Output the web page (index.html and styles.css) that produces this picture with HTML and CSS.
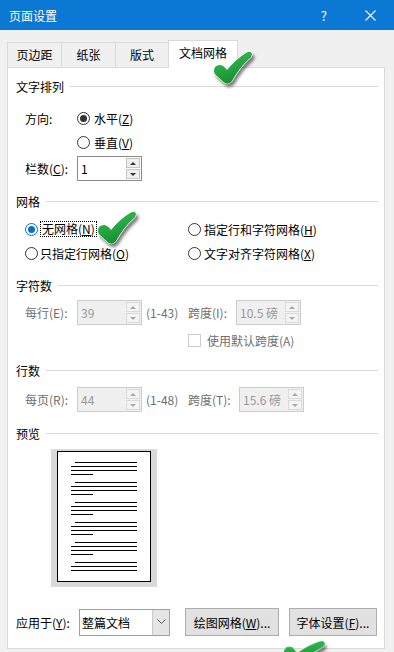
FILE: index.html
```html
<!DOCTYPE html>
<html lang="zh-CN">
<head>
  <meta charset="UTF-8">
  <title>页面设置</title>
  <link rel="stylesheet" href="styles.css">
</head>
<body>
  <div class="titlebar">
    <span class="title">页面设置</span>
    <span class="help">?</span>
    <svg class="close" width="11" height="11" viewBox="0 0 11 11"><path d="M0.5 0.5 L10.5 10.5 M10.5 0.5 L0.5 10.5" stroke="#fff" stroke-width="1.1"/></svg>
  </div>

  <div class="tabs">
    <div class="tab t1">页边距</div>
    <div class="tab t2">纸张</div>
    <div class="tab t3">版式</div>
    <div class="tab active">文档网格</div>
  </div>

  <div class="panel">
    <div class="group-title g1">文字排列</div>
    <div class="row dir">
      <span class="label">方向:</span>
      <span class="radio checked"></span><span>水平(<u>Z</u>)</span>
    </div>
    <div class="row dir indent">
      <span class="radio"></span><span>垂直(<u>V</u>)</span>
    </div>
    <div class="row cols">
      <span class="label">栏数(<u>C</u>):</span>
      <div class="spin"><span class="val">1</span><span class="arrows"><i class="up"></i><i class="down"></i></span></div>
    </div>

    <div class="group-title g2">网格</div>
    <div class="row grid first">
      <div class="opt"><span class="radio on"></span><span class="focus">无网格(<u>N</u>)</span></div>
      <div class="opt"><span class="radio"></span><span>指定行和字符网格(<u>H</u>)</span></div>
    </div>
    <div class="row grid">
      <div class="opt"><span class="radio"></span><span>只指定行网格(<u>O</u>)</span></div>
      <div class="opt"><span class="radio"></span><span>文字对齐字符网格(<u>X</u>)</span></div>
    </div>

    <div class="group-title g3">字符数</div>
    <div class="row num off chars">
      <span class="label">每行(E):</span>
      <div class="spin off"><span class="val">39</span><span class="arrows"><i class="up"></i><i class="down"></i></span></div>
      <span class="range">(1-43)</span>
      <span class="label2">跨度(I):</span>
      <div class="spin off"><span class="val">10.5 磅</span><span class="arrows"><i class="up"></i><i class="down"></i></span></div>
    </div>
    <div class="row check off">
      <span class="box"></span><span>使用默认跨度(A)</span>
    </div>

    <div class="group-title g4">行数</div>
    <div class="row num off lines">
      <span class="label">每页(R):</span>
      <div class="spin off"><span class="val">44</span><span class="arrows"><i class="up"></i><i class="down"></i></span></div>
      <span class="range">(1-48)</span>
      <span class="label2 wide">跨度(T):</span>
      <div class="spin off"><span class="val">15.6 磅</span><span class="arrows"><i class="up"></i><i class="down"></i></span></div>
    </div>

    <div class="group-title g5">预览</div>
    <div class="preview">
      <div class="page">
        <div class="para"><i class="ind"></i><i></i><i></i><i class="short"></i></div>
        <div class="para"><i class="ind"></i><i></i><i></i><i class="short"></i></div>
        <div class="para"><i class="ind"></i><i></i><i></i><i class="short"></i></div>
        <div class="para"><i class="ind"></i><i></i><i></i><i class="short"></i></div>
        <div class="para"><i class="ind"></i><i></i><i></i><i class="short"></i></div>
        <div class="para"><i class="ind"></i><i></i><i></i></div>
      </div>
    </div>

    <div class="row bottom">
      <span class="label3">应用于(<u>Y</u>):</span>
      <div class="select"><span class="val">整篇文档</span><span class="drop"><svg width="9" height="6" viewBox="0 0 9 6"><path d="M0.5 0.5 L4.5 4.5 L8.5 0.5" fill="none" stroke="#555" stroke-width="1"/></svg></span></div>
      <button class="btn b1">绘图网格(<u>W</u>)...</button>
      <button class="btn b2">字体设置(<u>F</u>)...</button>
    </div>
  </div>

  <svg width="0" height="0" class="defs">
    <defs>
      <linearGradient id="tickfill" x1="0" y1="0" x2="0.4" y2="1">
        <stop offset="0" stop-color="#3cc25a"/>
        <stop offset="1" stop-color="#14902f"/>
      </linearGradient>
      <path id="tickshape" d="M1,20 Q1,14 7,14 Q10,14 14,19 Q23,8 33,2 Q38,-1 39,3 Q39,6 36,8 Q26,17 19,30 Q16,34 12,32 Q9,30 5,26 Q1,23 1,20 Z"/>
    </defs>
  </svg>
  <svg class="tick tick-tab" width="40" height="34" viewBox="0 0 40 34"><use href="#tickshape"/></svg>
  <svg class="tick tick-grid" width="40" height="34" viewBox="0 0 40 34"><use href="#tickshape"/></svg>
  <svg class="tick tick-bottom" width="40" height="34" viewBox="0 0 40 34"><use href="#tickshape"/></svg>
</body>
</html>
```

FILE: styles.css
```css
body {
  margin: 0;
  width: 394px;
  height: 652px;
  overflow: hidden;
  position: relative;
  background: #f0f0f0;
  font-family: "Microsoft YaHei", "Noto Sans CJK SC", sans-serif;
  font-size: 12px;
  color: #000;
}
u { text-decoration-thickness: 1px; text-underline-offset: 1px; }

.titlebar {
  height: 30px;
  background: #0b78d4;
  color: #fff;
  display: flex;
  align-items: center;
  padding-left: 9px;
}
.title { flex: 1; font-size: 12px; }
.help { font-size: 13px; margin-right: 38px; }
.close { margin-right: 18px; }

.tabs {
  margin-top: 10px;
  padding-left: 7px;
  display: flex;
  align-items: flex-end;
  height: 27px;
}
.tab {
  box-sizing: border-box;
  height: 25px;
  border: 1px solid #d9d9d9;
  border-bottom: none;
  background: #f0f0f0;
  display: flex;
  align-items: center;
  justify-content: center;
  padding-bottom: 1px;
  margin-left: -1px;
}
.t1 { width: 55px; margin-left: 0; }
.t2 { width: 55px; }
.t3 { width: 54px; }
.tab.active {
  width: 70px;
  height: 28px;
  margin-bottom: -1px;
  background: #fff;
  position: relative;
  z-index: 2;
  padding-bottom: 4px;
}

.panel {
  box-sizing: border-box;
  width: 378px;
  margin-left: 7px;
  background: #fff;
  border: 1px solid #d9d9d9;
  padding: 0 6px 12px 8px;
}

.group-title {
  height: 20px;
  display: flex;
  align-items: center;
}
.group-title::after {
  content: "";
  flex: 1;
  border-top: 1px solid #dcdcdc;
  margin-left: 6px;
}
.g1 { margin-top: 8px; }
.g2, .g3 { margin-top: 10px; }
.g4 { margin-top: 8px; }
.g5 { margin-top: 11px; }

.row {
  display: flex;
  align-items: center;
  height: 24px;
  padding-left: 9px;
}
.label { width: 52px; }
.g1 + .dir { margin-top: 10px; }
.indent { padding-left: 61px; }
.dir .radio { margin-right: 4px; }
.cols { height: 25px; margin-top: 2px; }

.radio {
  box-sizing: border-box;
  width: 13px;
  height: 13px;
  border: 1px solid #333;
  border-radius: 50%;
  background: #fff;
  display: inline-flex;
  align-items: center;
  justify-content: center;
  margin-right: 3px;
}
.radio.checked::after,
.radio.on::after {
  content: "";
  width: 7px;
  height: 7px;
  border-radius: 50%;
  background: #333;
}
.radio.on { border-color: #0b6fc9; }
.radio.on::after { background: #0b6fc9; }

.grid.first { margin-top: 6px; }
.opt { display: flex; align-items: center; }
.opt:first-child { width: 163px; }
.opt:first-child .radio { margin-right: 2px; }
.focus {
  border: 1px dotted #000;
  padding: 0 1px;
  line-height: 14px;
}

.spin {
  box-sizing: border-box;
  width: 65px;
  height: 25px;
  border: 1px solid #8a8a8a;
  background: #fff;
  display: flex;
}
.spin .val { flex: 1; padding-left: 3px; line-height: 23px; }
.arrows {
  width: 14px;
  margin: 1px 1px 1px 0;
  display: flex;
  flex-direction: column;
  gap: 1px;
}
.arrows i {
  flex: 1;
  background: #f0f0f0;
  border: 1px solid #c4c4c4;
  display: flex;
  align-items: center;
  justify-content: center;
}
.arrows i::after {
  content: "";
  border-left: 3px solid transparent;
  border-right: 3px solid transparent;
}
.up::after { border-bottom: 3px solid #333; }
.down::after { border-top: 3px solid #333; }

.off { color: #6f6f6f; }
.spin.off { border-color: #cccccc; background: #f0f0f0; }
.spin.off .val { color: #999; }
.spin.off .arrows i { background: #f4f4f4; border-color: #dadada; }
.spin.off .up::after { border-bottom-color: #a8a8a8; }
.spin.off .down::after { border-top-color: #a8a8a8; }

.num { height: 25px; }
.chars { margin-top: 5px; }
.lines { margin-top: 7px; }
.range { width: 42px; padding-left: 4px; }
.label2 { width: 48px; }
.label2.wide { width: 51px; }

.check { height: 23px; margin-top: 4px; padding-left: 172px; }
.box {
  box-sizing: border-box;
  width: 13px;
  height: 13px;
  border: 1px solid #cccccc;
  background: #fff;
  margin-right: 6px;
}

.preview {
  margin: 6px 0 0 35px;
  width: 106px;
  height: 138px;
  background: #d9d9d9;
  padding: 2px 6px 5px 6px;
  box-sizing: border-box;
}
.page {
  height: 131px;
  box-sizing: border-box;
  background: #fff;
  border: 1px solid #000;
  padding: 10px 13px 0 13px;
  display: flex;
  flex-direction: column;
  gap: 7px;
}
.para { display: flex; flex-direction: column; gap: 3px; }
.para i { height: 1px; background: #000; }
.para i.ind { margin-left: 4px; }
.para i.short { width: 22px; }

.bottom {
  height: 28px;
  margin-top: 21px;
  padding-left: 0;
}
.label3 { width: 63px; }
.select {
  box-sizing: border-box;
  width: 91px;
  height: 27px;
  border: 1px solid #a0a0a0;
  display: flex;
  background: #fff;
}
.select .val { flex: 1; padding-left: 2px; line-height: 25px; }
.drop {
  width: 16px;
  background: #e5e5e5;
  border-left: 1px solid #c8c8c8;
  display: flex;
  align-items: center;
  justify-content: center;
}
.btn {
  box-sizing: border-box;
  height: 28px;
  border: 1px solid #adadad;
  background: #e1e1e1;
  font: inherit;
  color: #000;
  padding: 0;
}
.b1 { width: 94px; margin-left: 15px; }
.b2 { width: 88px; margin-left: 10px; }

.defs { position: absolute; }
.tick {
  position: absolute;
  z-index: 5;
  filter: drop-shadow(2px 3px 1.5px rgba(0, 0, 0, 0.5));
}
.tick use {
  fill: url(#tickfill);
  stroke: #fff;
  stroke-width: 1.2;
  paint-order: stroke;
}
.tick-tab { left: 213px; top: 51px; }
.tick-grid { left: 97px; top: 211px; }
.tick-bottom { left: 283px; top: 636px; transform: rotate(14deg); }
```
